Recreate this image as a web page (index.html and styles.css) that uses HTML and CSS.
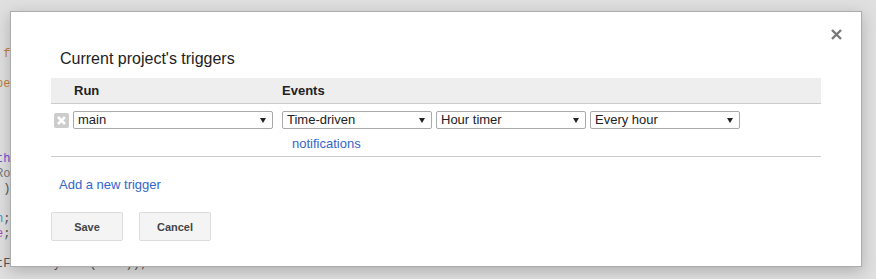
FILE: index.html
```html
<!DOCTYPE html>
<html lang="en">
<head>
<meta charset="UTF-8">
<title>Current project's triggers</title>
<link rel="stylesheet" href="styles.css">
</head>
<body>
	<!-- editor behind the dialog -->
	<pre class="editor"><span class="c-str"> f</span>

<span class="c-str">pe</span>




<span class="c-kw">th</span>
<span class="c-dim">Ro</span>
 )

<span class="c-num">n</span>;
<span class="c-var">e</span>;

tFolderByName(name));</pre>

	<div class="dialog">
		<button class="close" title="Close">
			<svg width="11" height="11" viewBox="0 0 11 11"><path d="M1 1L10 10M10 1L1 10" stroke="#777" stroke-width="2.4" fill="none"/></svg>
		</button>
		<h2 class="title">Current project's triggers</h2>
		<div class="triggers">
			<div class="head">
				<span class="col-run">Run</span>
				<span class="col-events">Events</span>
			</div>
			<div class="row">
				<span class="remove">
					<svg width="15" height="15" viewBox="0 0 15 15"><path d="M4 4L11 11M11 4L4 11" stroke="#fff" stroke-width="2.6" fill="none"/></svg>
				</span>
				<div class="select run">main</div>
				<div class="events">
					<div class="selects">
						<div class="select">Time-driven</div>
						<div class="select">Hour timer</div>
						<div class="select">Every hour</div>
					</div>
					<a class="notif" href="#">notifications</a>
				</div>
			</div>
		</div>
		<a class="add" href="#">Add a new trigger</a>
		<div class="actions">
			<button class="btn">Save</button>
			<button class="btn">Cancel</button>
		</div>
	</div>
</body>
</html>
```

FILE: styles.css
```css
*{box-sizing:border-box;}
body{
	margin:0;
	height:279px;
	overflow:hidden;
	position:relative;
	background:#dfdfdf;
	font-family:"Liberation Sans", Arial, sans-serif;
}
a{text-decoration:none;color:#3366cc;}

.editor{
	margin:47px 0 0 -4px;
	font:12px/15px "Liberation Mono", monospace;
	color:#555;
}
.c-str{color:#c0803c;}
.c-kw{color:#6e4fd2;}
.c-dim{color:#777;}
.c-num{color:#3b96d6;}
.c-var{color:#b040c0;}

.dialog{
	position:absolute;
	left:10px;
	top:11px;
	width:852px;
	height:256px;
	padding:37px 40px 0;
	background:#fff;
	border:1px solid #acacac;
	box-shadow:0 4px 14px rgba(0,0,0,.22);
}
.close{
	position:absolute;
	top:17px;
	right:19px;
	width:11px;
	height:11px;
	padding:0;
	border:none;
	background:transparent;
	cursor:pointer;
}
.close svg{display:block;}
.title{
	margin:0;
	padding-left:9px;
	font-size:16px;
	line-height:20px;
	font-weight:normal;
	color:#222;
}

.triggers{
	width:770px;
	margin-top:9px;
}
.head{
	height:26px;
	display:flex;
	align-items:center;
	background:#eee;
	border-bottom:1px solid #ccc;
	font-size:13px;
	font-weight:bold;
	color:#222;
}
.col-run{
	width:231px;
	padding-left:23px;
}
.row{
	height:53px;
	display:flex;
	align-items:flex-start;
	padding:7px 0 0 3px;
	border-bottom:1px solid #ccc;
}
.remove{
	width:15px;
	height:15px;
	margin:2px 4px 0 0;
	border-radius:2px;
	background:#ccc;
}
.remove svg{display:block;}
.select{
	width:150px;
	height:18px;
	display:flex;
	justify-content:space-between;
	align-items:center;
	padding:0 6px 0 4px;
	border:1px solid #a9a9a9;
	border-radius:2px;
	font-size:13px;
	line-height:16px;
	color:#222;
}
.select::after{
	content:"";
	border-top:5px solid #222;
	border-left:3px solid transparent;
	border-right:3px solid transparent;
}
.select.run{
	width:200px;
	margin-right:9px;
}
.selects{
	display:flex;
	gap:4px;
}
.notif{
	display:block;
	margin:7px 0 0 10px;
	font-size:13px;
	line-height:16px;
}

.add{
	display:block;
	margin:20px 0 0 8px;
	font-size:13px;
	line-height:16px;
}
.actions{
	display:flex;
	gap:16px;
	margin-top:19px;
}
.btn{
	width:72px;
	height:29px;
	padding:0;
	background:#f4f4f4;
	border:1px solid #dcdcdc;
	border-radius:2px;
	font-family:"Liberation Sans", Arial, sans-serif;
	font-size:11px;
	font-weight:bold;
	color:#444;
	cursor:pointer;
}
```
